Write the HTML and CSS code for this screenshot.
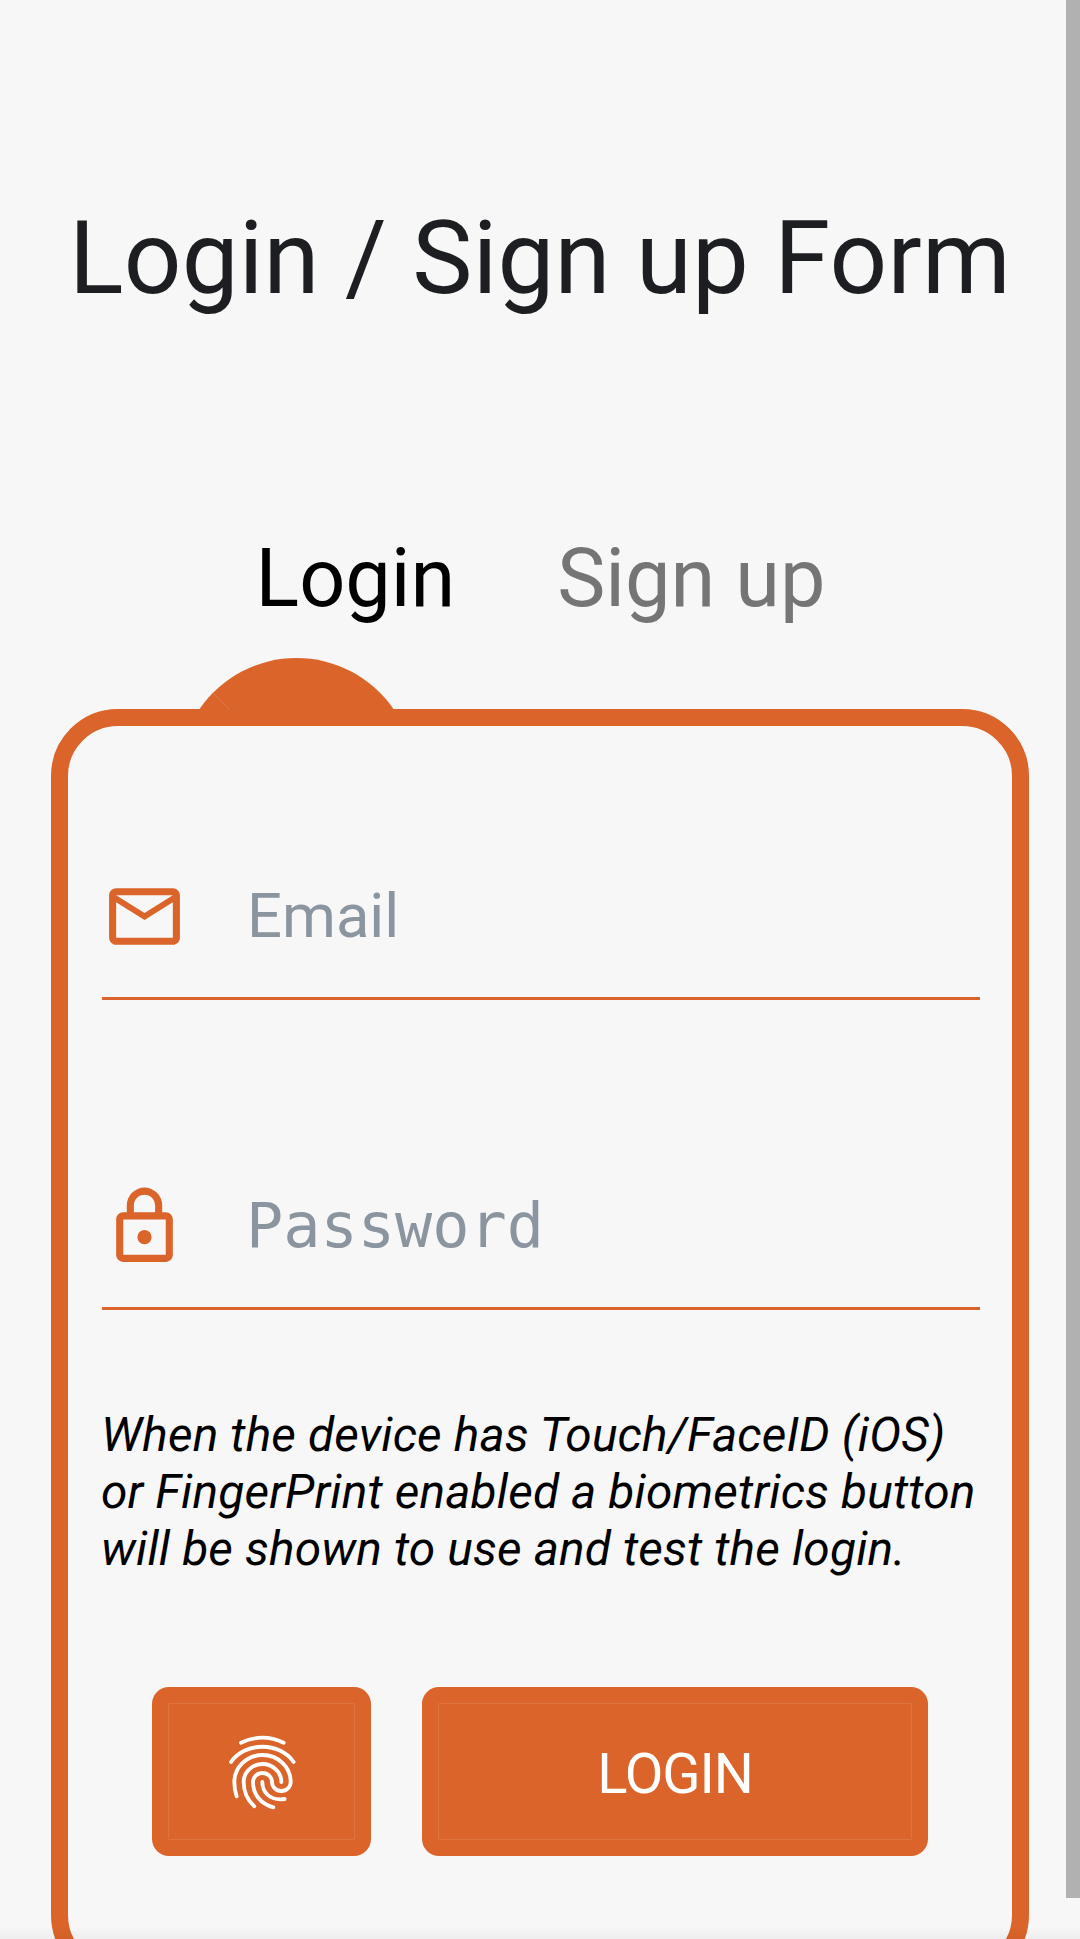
FILE: index.html
```html
<!DOCTYPE html>
<html lang="en">
<head>
<meta charset="utf-8">
<title>Login / Sign up Form</title>
<link rel="stylesheet" href="styles.css">
</head>
<body>
<main class="screen">
  <h1 class="title">Login / Sign up Form</h1>
  <nav class="tabs">
    <a class="tab tab-active">Login</a>
    <a class="tab">Sign up</a>
  </nav>
  <svg class="bump" viewBox="0 0 195 52">
    <path fill="#da642a" d="M0.500 52A117.700 117.700 0 0 1 194.500 52Z"/>
    <path stroke="#e18a5c" stroke-width=".6" d="M13.500 35.500L30 52"/>
  </svg>
  <form class="card">
    <label class="field">
      <svg class="icon" viewBox="0 0 24 24"><path d="M22 6c0-1.100-.9-2-2-2H4c-1.100 0-2 .9-2 2v12c0 1.100.9 2 2 2h16c1.100 0 2-.9 2-2V6zm-2 0l-8 5-8-5h16zm0 12H4V8l8 5 8-5v10z"/></svg>
      <input class="input" type="text" placeholder="Email">
    </label>
    <label class="field">
      <svg class="icon" viewBox="0 0 24 24"><path d="M12 17a2 2 0 1 0 0-4 2 2 0 0 0 0 4zm6-9h-1V6A5 5 0 0 0 7 6v2H6c-1.100 0-2 .9-2 2v10c0 1.100.9 2 2 2h12c1.100 0 2-.9 2-2V10c0-1.100-.9-2-2-2zM9 6a3 3 0 0 1 6 0v2H9V6zm9 14H6V10h12v10z"/></svg>
      <input class="input input-mono" type="password" placeholder="Password">
    </label>
    <p class="note">When the device has Touch/FaceID (iOS)<br>or FingerPrint enabled a biometrics button<br>will be shown to use and test the login.</p>
    <div class="actions">
      <button class="button button-print" type="button" aria-label="Fingerprint">
        <svg class="print" viewBox="260 185 220 240">
          <path d="M305 217Q369 187 433 217"/>
          <path d="M275 275C318 214 420 214 463 275"/>
          <path d="M292 378Q285 358 285 335A84.500 81 0 0 1 454 335A28 27 0 0 1 398 335A28.500 27 0 0 0 341 335C341 372 364 401 402 411"/>
          <path d="M345 408C324 389 313 364 313 335A56.500 54 0 0 1 426 335"/>
          <path d="M369 335C369 368 394 392 436 386"/>
        </svg>
      </button>
      <button class="button button-login" type="button">LOGIN</button>
    </div>
  </form>
  <div class="scrollbar"></div>
  <div class="edge"></div>
</main>
</body>
</html>
```
FILE: styles.css
```css
* { box-sizing: border-box; }
body {
  margin: 0;
  background: #f7f7f7;
  font-family: Roboto, "Liberation Sans", sans-serif;
}
.screen {
  position: relative;
  width: 1080px;
  height: 1939px;
  overflow: hidden;
  padding: 199px 51px 0;
}
.title {
  margin: 0;
  height: 120px;
  line-height: 120px;
  font-size: 101.25px;
  font-weight: 400;
  letter-spacing: .2px;
  color: #1d1e22;
  text-align: center;
  white-space: nowrap;
}
.tabs {
  display: flex;
  justify-content: center;
  gap: 102px;
  margin-top: 210px;
  padding-left: 1px;
  height: 100px;
  line-height: 100px;
  font-size: 81px;
  color: #757575;
  white-space: nowrap;
}
.tab-active { color: #000; }
.bump {
  display: block;
  width: 195px;
  height: 52px;
  margin: 28px 0 0 147.500px;
}
.card {
  width: 978px;
  height: 1273px;
  border: 17px solid #da642a;
  border-radius: 67px;
  padding: 106px 32px 0 34px;
}
.field {
  display: flex;
  align-items: center;
  height: 168px;
  padding-top: 3px;
  border-bottom: 3px solid #da642a;
}
.field + .field { margin-top: 142px; }
.icon {
  flex: none;
  width: 85px;
  height: 85px;
  fill: #da642a;
}
.input {
  flex: 1;
  min-width: 0;
  height: 110px;
  margin-left: 60px;
  padding: 0;
  border: 0;
  outline: 0;
  background: none;
  font: 61.5px/110px Roboto, sans-serif;
}
.input-mono { margin-left: 59px; font: 61.875px/110px "DejaVu Sans Mono", monospace; }
.input::placeholder { color: #8a959f; opacity: 1; }
.note {
  margin: 97px 0 0 -1px;
  font-size: 47.800px;
  font-style: italic;
  line-height: 57px;
  letter-spacing: .15px;
  color: #000;
  white-space: nowrap;
}
.actions {
  display: flex;
  gap: 51px;
  margin: 109px 0 0 50px;
}
.button {
  display: flex;
  align-items: center;
  justify-content: center;
  height: 169px;
  padding: 0;
  border: 0;
  border-radius: 17px;
  outline: 1px solid #df723d;
  outline-offset: -17px;
  background: #da642a;
  color: #fff;
  font: 56.250px/66px Roboto, sans-serif;
}
.button-print { width: 219px; padding-left: 3px; }
.button-login {
  width: 506px;
  padding-top: 4px;
  letter-spacing: -1.1px;
}
.print {
  width: 73.330px;
  height: 80px;
  fill: none;
  stroke: #fff;
  stroke-width: 11.500;
  stroke-linecap: round;
}
.scrollbar {
  position: absolute;
  top: 0;
  right: 0;
  width: 14px;
  height: 1898px;
  background: #b1b1b1;
}
.edge {
  position: absolute;
  left: 0;
  right: 0;
  bottom: 0;
  height: 12px;
  background: linear-gradient(rgba(0, 0, 0, 0), rgba(0, 0, 0, .04));
}
```
